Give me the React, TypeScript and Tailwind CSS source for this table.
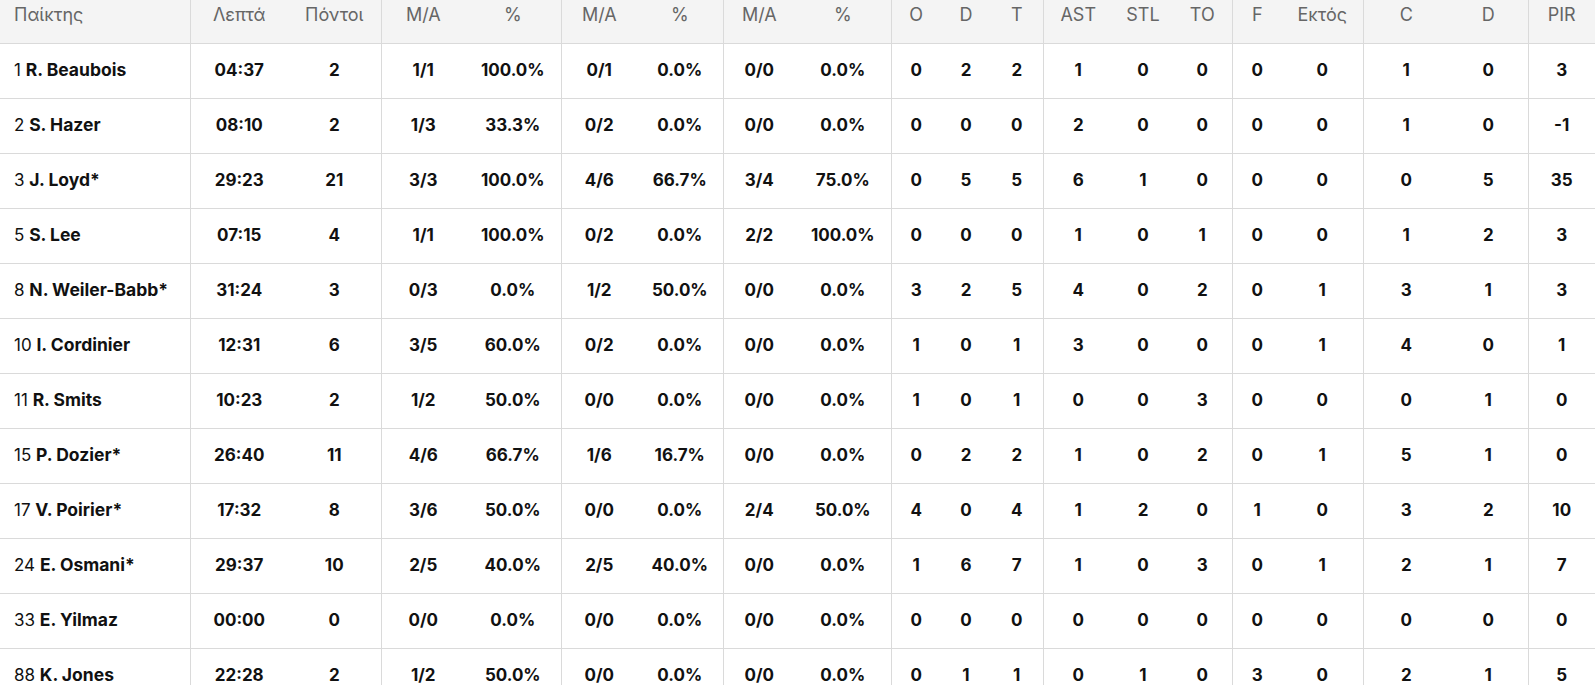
import React from "react";

const widths = [190, 98, 93, 84, 96, 76, 86, 72, 96, 50, 50, 52, 70, 60, 59, 50, 81, 86, 79, 67];
const groupStart = new Set([1, 3, 5, 7, 9, 12, 15, 17, 19]);

const headers = ["Παίκτης", "Λεπτά", "Πόντοι", "M/A", "%", "M/A", "%", "M/A", "%", "O", "D", "T", "AST", "STL", "TO", "F", "Εκτός", "C", "D", "PIR"];

const rows: [string, string, ...string[]][] = [
  ["1", "R. Beaubois", "04:37", "2", "1/1", "100.0%", "0/1", "0.0%", "0/0", "0.0%", "0", "2", "2", "1", "0", "0", "0", "0", "1", "0", "3"],
  ["2", "S. Hazer", "08:10", "2", "1/3", "33.3%", "0/2", "0.0%", "0/0", "0.0%", "0", "0", "0", "2", "0", "0", "0", "0", "1", "0", "-1"],
  ["3", "J. Loyd*", "29:23", "21", "3/3", "100.0%", "4/6", "66.7%", "3/4", "75.0%", "0", "5", "5", "6", "1", "0", "0", "0", "0", "5", "35"],
  ["5", "S. Lee", "07:15", "4", "1/1", "100.0%", "0/2", "0.0%", "2/2", "100.0%", "0", "0", "0", "1", "0", "1", "0", "0", "1", "2", "3"],
  ["8", "N. Weiler-Babb*", "31:24", "3", "0/3", "0.0%", "1/2", "50.0%", "0/0", "0.0%", "3", "2", "5", "4", "0", "2", "0", "1", "3", "1", "3"],
  ["10", "I. Cordinier", "12:31", "6", "3/5", "60.0%", "0/2", "0.0%", "0/0", "0.0%", "1", "0", "1", "3", "0", "0", "0", "1", "4", "0", "1"],
  ["11", "R. Smits", "10:23", "2", "1/2", "50.0%", "0/0", "0.0%", "0/0", "0.0%", "1", "0", "1", "0", "0", "3", "0", "0", "0", "1", "0"],
  ["15", "P. Dozier*", "26:40", "11", "4/6", "66.7%", "1/6", "16.7%", "0/0", "0.0%", "0", "2", "2", "1", "0", "2", "0", "1", "5", "1", "0"],
  ["17", "V. Poirier*", "17:32", "8", "3/6", "50.0%", "0/0", "0.0%", "2/4", "50.0%", "4", "0", "4", "1", "2", "0", "1", "0", "3", "2", "10"],
  ["24", "E. Osmani*", "29:37", "10", "2/5", "40.0%", "2/5", "40.0%", "0/0", "0.0%", "1", "6", "7", "1", "0", "3", "0", "1", "2", "1", "7"],
  ["33", "E. Yilmaz", "00:00", "0", "0/0", "0.0%", "0/0", "0.0%", "0/0", "0.0%", "0", "0", "0", "0", "0", "0", "0", "0", "0", "0", "0"],
  ["88", "K. Jones", "22:28", "2", "1/2", "50.0%", "0/0", "0.0%", "0/0", "0.0%", "0", "1", "1", "0", "1", "0", "3", "0", "2", "1", "5"],
];

export default function App() {
  return (
    <div className="w-[1595px] h-[685px] overflow-hidden bg-white" style={{ fontFamily: "Inter, 'Noto Sans', sans-serif" }}>
      <table className="table-fixed border-collapse w-[1595px] text-[17px] leading-[24px]">
        <colgroup>
          {widths.map((w, i) => (
            <col key={i} style={{ width: w }} />
          ))}
        </colgroup>
        <thead>
          <tr className="h-[43px] bg-[#f4f4f4] border-b border-[#dadada]">
            {headers.map((h, i) => (
              <th
                key={i}
                className={`align-top pt-[3px] px-0 pb-0 text-[18px] font-normal text-[#666666] ${i === 0 ? "text-left pl-[14px]" : "text-center"} ${groupStart.has(i) ? "border-l border-[#dadada]" : ""}`}
              >
                {h}
              </th>
            ))}
          </tr>
        </thead>
        <tbody>
          {rows.map((r, ri) => {
            const [num, name, ...vals] = r;
            return (
              <tr key={ri} className="h-[55px] border-b border-[#dadada]">
                <td className="pt-0 pr-0 pb-[1px] pl-[14px] text-left text-[#111111] whitespace-nowrap">
                  <span className="font-normal">{num}</span> <span className="font-bold text-[17.5px]">{name}</span>
                </td>
                {vals.map((v, vi) => (
                  <td
                    key={vi}
                    className={`pt-0 px-0 pb-[1px] text-center font-bold text-[#111111] ${groupStart.has(vi + 1) ? "border-l border-[#dadada]" : ""}`}
                  >
                    {v}
                  </td>
                ))}
              </tr>
            );
          })}
        </tbody>
      </table>
    </div>
  );
}
